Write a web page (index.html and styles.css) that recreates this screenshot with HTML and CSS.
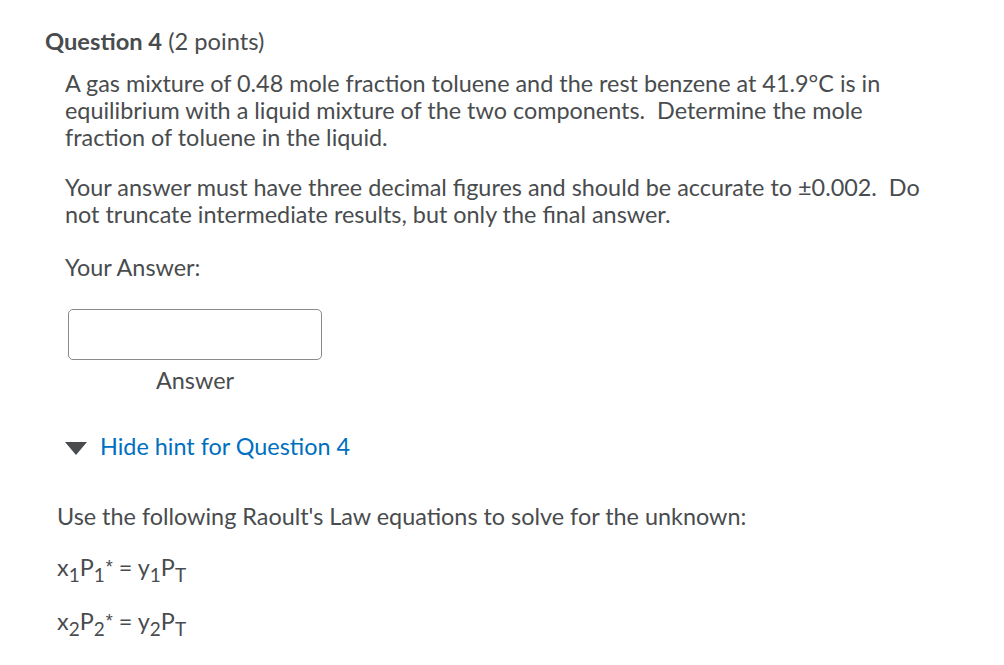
FILE: index.html
```html
<!DOCTYPE html>
<html>
<head>
<meta charset="utf-8">
<link rel="stylesheet" href="styles.css">
</head>
<body>
<div class="page">
  <h2 class="qtitle"><strong>Question 4</strong> <span class="pts">(2 points)</span></h2>
  <div class="qbody">
    <p class="para">A gas mixture of 0.48 mole fraction toluene and the rest benzene at 41.9°C is in equilibrium with a liquid mixture of the two components.&nbsp; Determine the mole fraction of toluene in the liquid.</p>
    <p class="para">Your answer must have three decimal figures and should be accurate to ±0.002.&nbsp; Do not truncate intermediate results, but only the final answer.</p>
    <p class="label">Your Answer:</p>
    <div class="answer">
      <div class="box"></div>
      <div class="caption">Answer</div>
    </div>
    <div class="hint">
      <span class="tri"></span>
      <a class="hintlink">Hide hint for Question 4</a>
    </div>
  </div>
  <div class="hintbody">
    <p class="use">Use the following Raoult's Law equations to solve for the unknown:</p>
    <p class="eq">x<sub>1</sub>P<sub>1</sub><sup>*</sup> = y<sub>1</sub>P<sub>T</sub></p>
    <p class="eq">x<sub>2</sub>P<sub>2</sub><sup>*</sup> = y<sub>2</sub>P<sub>T</sub></p>
  </div>
</div>
</body>
</html>
```

FILE: styles.css
```css
html, body {
  margin: 0;
  padding: 0;
  background: #ffffff;
}
body {
  font-family: Lato, "Open Sans", sans-serif;
  color: #494c4e;
}
.page {
  padding: 27px 0 0 45px;
}
.qtitle {
  margin: 0;
  font-size: 23.7px;
  line-height: 28px;
  font-weight: 400;
}
.qtitle strong {
  font-weight: 700;
}
.qbody {
  padding-left: 20px;
  margin-top: 15px;
}
.para {
  margin: 0 0 23px 0;
  font-size: 23.4px;
  line-height: 27px;
  width: 880px;
}
.label {
  margin: 0;
  font-size: 23.4px;
  line-height: 27px;
  padding-top: 3px;
}
.answer {
  margin-top: 28px;
  width: 254px;
  margin-left: 3px;
}
.box {
  height: 49px;
  border: 1px solid #8a8a8a;
  border-radius: 5px;
  background: #fff;
}
.caption {
  text-align: center;
  font-size: 23.4px;
  line-height: 27px;
  margin-top: 7px;
}
.hint {
  display: flex;
  align-items: center;
  margin-top: 39px;
  gap: 13px;
  padding-left: 0;
}
.tri {
  width: 0;
  height: 0;
  border-left: 11px solid transparent;
  border-right: 11px solid transparent;
  border-top: 13px solid #494c4e;
  margin-top: 3px;
}
.hintlink {
  color: #006fbf;
  font-size: 23.4px;
  line-height: 27px;
}
.hintbody {
  padding-left: 12px;
  margin-top: 43px;
}
.use {
  margin: 0;
  font-size: 23.4px;
  line-height: 27px;
}
.eq {
  margin: 22px 0 0 0;
  font-size: 23.4px;
  line-height: 30px;
}
.eq sub, .eq sup {
  font-size: 19px;
  line-height: 0;
}
.eq sub {
  vertical-align: -6px;
}
.eq sup {
  font-family: "Liberation Sans", sans-serif;
  font-size: 18px;
  vertical-align: 3px;
  margin-left: 1px;
}
.eq + .eq {
  margin-top: 24px;
}
```
